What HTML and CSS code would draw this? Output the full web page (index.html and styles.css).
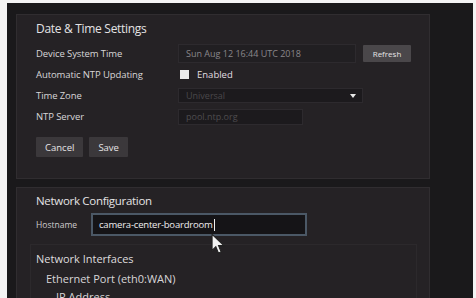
FILE: index.html
```html
<!DOCTYPE html>
<html>
<head>
<meta charset="utf-8">
<link rel="stylesheet" href="styles.css">
</head>
<body>
<div class="frame">
  <section class="panel panel-time">
    <h2 class="title">Date &amp; Time Settings</h2>
    <div class="row">
      <span class="label">Device System Time</span>
      <span class="field field-time">Sun Aug 12 16:44 UTC 2018</span>
      <span class="btn btn-small">Refresh</span>
    </div>
    <div class="row">
      <span class="label">Automatic NTP Updating</span>
      <span class="check"></span>
      <span class="check-label">Enabled</span>
    </div>
    <div class="row">
      <span class="label">Time Zone</span>
      <span class="field field-select">Universal<span class="caret"></span></span>
    </div>
    <div class="row">
      <span class="label">NTP Server</span>
      <span class="field field-ntp">pool.ntp.org</span>
    </div>
    <div class="buttons">
      <span class="btn">Cancel</span>
      <span class="btn">Save</span>
    </div>
  </section>
  <section class="panel panel-net">
    <h2 class="title">Network Configuration</h2>
    <div class="host-row">
      <span class="host-label">Hostname</span>
      <span class="host-input">camera-center-boardroom<span class="cursor"></span></span>
      <svg class="pointer" width="15" height="22" viewBox="0 0 14 20"><path d="M1 1 L1 16 L4.5 12.5 L7 18.5 L9.5 17.5 L7 11.5 L12 11.5 Z" fill="#f2f2f2" stroke="#222" stroke-width="1"/></svg>
    </div>
    <div class="iface-box">
      <h3 class="subtitle">Network Interfaces</h3>
      <div class="iface">
        <div class="iface-name">Ethernet Port (eth0:WAN)</div>
        <div class="iface-item">IP Address</div>
      </div>
    </div>
  </section>
</div>
</body>
</html>
```
FILE: styles.css
```css
html, body {
  margin: 0;
  padding: 0;
  background: #f4f4f4;
  width: 476px;
  height: 298px;
  overflow: hidden;
}
body {
  font-family: "Open Sans", "DejaVu Sans", sans-serif;
  color: #d6d4d6;
}
.frame {
  margin: 3px 0 0 7px;
  width: 466px;
  height: 295px;
  background: #1a191b;
  padding: 11px 0 0 9px;
  box-sizing: border-box;
  display: flex;
  flex-direction: column;
  gap: 8px;
  overflow: hidden;
}
.panel {
  width: 414px;
  background: #252225;
  border: 1px solid #302d30;
  box-sizing: border-box;
  padding: 0 0 0 19px;
}
.panel-time {
  height: 165px;
  flex-shrink: 0;
  padding-top: 6px;
}
.panel-net {
  flex: 1 0 auto;
  padding-top: 5px;
}
.title {
  margin: 0 0 6px;
  font-size: 12px;
  font-weight: 400;
  color: #e4e2e4;
  line-height: 16px;
  letter-spacing: -0.3px;
}
.panel-net .title {
  font-size: 11.5px;
  margin-bottom: 4px;
}
.row {
  display: flex;
  align-items: center;
  height: 21px;
}
.label {
  width: 142px;
  font-size: 9.5px;
  color: #d8d6d8;
  letter-spacing: -0.1px;
}
.field {
  box-sizing: border-box;
  background: #211f22;
  border: 1px solid #2d2a2e;
  font-size: 9px;
  color: #6e6b6f;
  padding: 0 7px;
  display: flex;
  align-items: center;
}
.field-time {
  width: 178px;
  height: 19px;
  color: #8a878b;
}
.field-select {
  width: 185px;
  height: 15px;
  background: #1c1a1d;
  color: #4a484b;
  position: relative;
}
.caret {
  position: absolute;
  right: 6px;
  top: 5px;
  width: 0;
  height: 0;
  border-left: 3px solid transparent;
  border-right: 3px solid transparent;
  border-top: 4px solid #e8e8e8;
}
.field-ntp {
  width: 125px;
  height: 16px;
  background: #1c1a1d;
  color: #4e4c4f;
}
.btn {
  display: inline-flex;
  align-items: center;
  justify-content: center;
  background: #3b383b;
  color: #e6e4e6;
  font-size: 9.5px;
  border-radius: 1px;
}
.btn-small {
  margin-left: 7px;
  width: 48px;
  height: 17px;
  font-size: 8px;
  background: #4a474a;
}
.check {
  width: 9px;
  height: 9px;
  background: #ececec;
  margin: 0 8px 0 2px;
}
.check-label {
  font-size: 9.5px;
  color: #e0dee0;
}
.buttons {
  display: flex;
  gap: 6px;
  margin-top: 10px;
}
.buttons .btn {
  height: 20px;
  padding: 0 9px;
}
.host-row {
  display: flex;
  align-items: center;
  position: relative;
}
.host-label {
  width: 55px;
  font-size: 8.5px;
  color: #cfcdcf;
}
.host-input {
  box-sizing: border-box;
  width: 216px;
  height: 23px;
  background: #151417;
  border: 2px solid #4b5866;
  font-size: 9.5px;
  color: #f0eef0;
  padding: 0 6px;
  display: flex;
  align-items: center;
  letter-spacing: -0.2px;
}
.cursor {
  width: 1px;
  height: 12px;
  background: #f0f0f0;
  margin-left: 1px;
}
.pointer {
  position: absolute;
  left: 175px;
  top: 20px;
}
.iface-box {
  margin: 8px 12px 0 -6px;
  padding: 7px 0 0 5px;
  border: 1px solid #2c292c;
  border-bottom: none;
}
.subtitle {
  margin: 0;
  font-size: 11px;
  font-weight: 400;
  color: #dedcde;
  line-height: 14px;
}
.iface {
  padding-left: 10px;
  font-size: 11px;
  color: #d8d6d8;
}
.iface-name {
  margin-top: 6px;
  line-height: 14px;
}
.iface-item {
  padding-left: 10px;
  margin-top: 4px;
  line-height: 14px;
}
```
